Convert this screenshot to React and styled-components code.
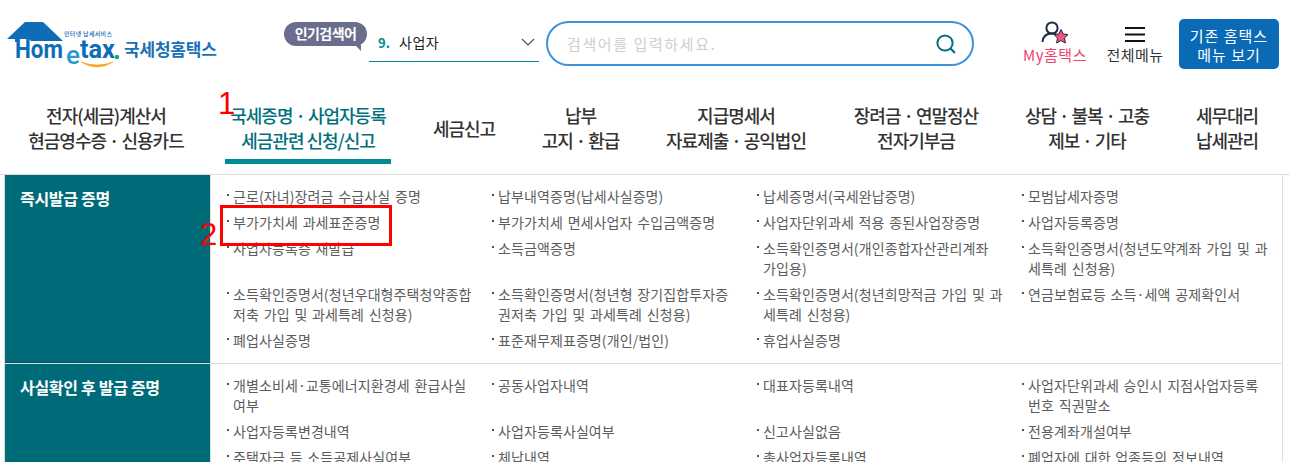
import React from "react";
import styled, { createGlobalStyle } from "styled-components";

const font = `"Noto Sans CJK KR", "Noto Sans", sans-serif`;

const GlobalStyle = createGlobalStyle`
  html, body {
    margin: 0;
    padding: 0;
    background: #fff;
    overflow: hidden;
  }
  body {
    font-family: ${font};
  }
`;

const navItems = [
  ["전자(세금)계산서", "현금영수증 · 신용카드"],
  ["국세증명 · 사업자등록", "세금관련 신청/신고"],
  ["세금신고"],
  ["납부", "고지 · 환급"],
  ["지급명세서", "자료제출 · 공익법인"],
  ["장려금 · 연말정산", "전자기부금"],
  ["상담 · 불복 · 고충", "제보 · 기타"],
  ["세무대리", "납세관리"],
];

const sections = [
  {
    title: "즉시발급 증명",
    items: [
      "근로(자녀)장려금 수급사실 증명",
      "납부내역증명(납세사실증명)",
      "납세증명서(국세완납증명)",
      "모범납세자증명",
      "부가가치세 과세표준증명",
      "부가가치세 면세사업자 수입금액증명",
      "사업자단위과세 적용 종된사업장증명",
      "사업자등록증명",
      "사업자등록증 재발급",
      "소득금액증명",
      "소득확인증명서(개인종합자산관리계좌 가입용)",
      "소득확인증명서(청년도약계좌 가입 및 과세특례 신청용)",
      "소득확인증명서(청년우대형주택청약종합저축 가입 및 과세특례 신청용)",
      "소득확인증명서(청년형 장기집합투자증권저축 가입 및 과세특례 신청용)",
      "소득확인증명서(청년희망적금 가입 및 과세특례 신청용)",
      "연금보험료등 소득·세액 공제확인서",
      "폐업사실증명",
      "표준재무제표증명(개인/법인)",
      "휴업사실증명",
    ],
  },
  {
    title: "사실확인 후 발급 증명",
    items: [
      "개별소비세·교통에너지환경세 환급사실 여부",
      "공동사업자내역",
      "대표자등록내역",
      "사업자단위과세 승인시 지점사업자등록 번호 직권말소",
      "사업자등록변경내역",
      "사업자등록사실여부",
      "신고사실없음",
      "전용계좌개설여부",
      "주택자금 등 소득공제사실여부",
      "체납내역",
      "총사업자등록내역",
      "폐업자에 대한 업종등의 정보내역",
    ],
  },
];

const Logo = () => (
  <LogoSvg viewBox="0 0 212 52" width="212" height="52">
    <path d="M0 19 L18 2 H36 L56 21 H24 L22 19 H12 V22 H8 V19 Z" fill="#0f6cb6" />
    <text x="8" y="38" fontFamily="Roboto, sans-serif" fontWeight="700" fontSize="25" textLength="48" lengthAdjust="spacingAndGlyphs" fill="#0f6cb6">
      Hom
    </text>
    <text x="59" y="44" fontFamily="Roboto, sans-serif" fontWeight="500" fontSize="26" textLength="14" lengthAdjust="spacingAndGlyphs" fill="#2a9ad6">
      e
    </text>
    <text x="73" y="38" fontFamily="Roboto, sans-serif" fontWeight="700" fontSize="25" textLength="35" lengthAdjust="spacingAndGlyphs" fill="#0f6cb6">
      tax
    </text>
    <circle cx="110" cy="37" r="2.2" fill="#1aa94f" />
    <path d="M74 42 Q90 52 106 42 Q90 48 74 42 Z" fill="#f5a623" stroke="#f5a623" strokeWidth="0.6" />
    <text x="57" y="15.5" fontFamily={font} fontWeight="500" fontSize="6" letterSpacing="0.3" fill="#0f6cb6">
      인터넷 납세서비스
    </text>
    <text x="117" y="36" fontFamily={font} fontWeight="700" fontSize="17" letterSpacing="-0.2" fill="#1a6fb5">
      국세청홈택스
    </text>
  </LogoSvg>
);

const Chevron = () => (
  <ChevronSvg viewBox="0 0 14 8" width="14" height="8">
    <path d="M1 1 L7 7 L13 1" fill="none" stroke="#555" strokeWidth="1.2" />
  </ChevronSvg>
);

const SearchIcon = () => (
  <svg viewBox="0 0 22 22" width="22" height="22">
    <circle cx="10" cy="10" r="7.6" fill="none" stroke="#00707c" strokeWidth="2" />
    <path d="M15.5 15.5 L20 20" stroke="#00707c" strokeWidth="2.2" />
  </svg>
);

const MyIcon = () => (
  <svg viewBox="0 0 28 26" width="28" height="26">
    <circle cx="11" cy="9" r="5.6" fill="none" stroke="#1f2a44" strokeWidth="2" />
    <path d="M1.5 23 C2 17 6 14.5 11 14.5 C12.5 14.5 14 14.8 15 15.4" fill="none" stroke="#1f2a44" strokeWidth="2" />
    <path
      d="M20 10.5 L22.2 15 L27 15.6 L23.5 19 L24.4 24 L20 21.6 L15.6 24 L16.5 19 L13 15.6 L17.8 15 Z"
      fill="#f4527a"
      stroke="#1f2a44"
      strokeWidth="1"
    />
  </svg>
);

const HamburgerIcon = () => (
  <svg viewBox="0 0 20 15" width="20" height="15">
    <path d="M0 1 H20 M0 7.5 H20 M0 14 H20" stroke="#111" strokeWidth="2" />
  </svg>
);

export default function App() {
  return (
    <Page>
      <GlobalStyle />
      <Header>
        <Logo />
        <Bubble>인기검색어</Bubble>
        <Rank>
          <RankNum>9.</RankNum>
          <RankText>사업자</RankText>
          <Chevron />
        </Rank>
        <SearchBox>
          <Placeholder>검색어를 입력하세요.</Placeholder>
          <SearchIcon />
        </SearchBox>
        <Tool $pink $w={66} $ml={48}>
          <MyIcon />
          <span>My홈택스</span>
        </Tool>
        <Tool $w={60} $ml={17}>
          <ToolIcon>
            <HamburgerIcon />
          </ToolIcon>
          <span>전체메뉴</span>
        </Tool>
        <OldButton>
          기존 홈택스
          <br />
          메뉴 보기
        </OldButton>
      </Header>

      <Nav>
        {navItems.map((lines, i) => (
          <NavCell key={i}>
            <NavLabel $active={i === 1}>
              {lines.map((l) => (
                <div key={l}>{l}</div>
              ))}
            </NavLabel>
          </NavCell>
        ))}
      </Nav>

      <Table>
        {sections.map((s, i) => (
          <Section key={s.title} $first={i === 0}>
            <SectionTitle>{s.title}</SectionTitle>
            <Items>
              {s.items.map((item) => (
                <Item key={item}>{item}</Item>
              ))}
            </Items>
          </Section>
        ))}
      </Table>

      <Mark $x={218} $y={86}>1</Mark>
      <Mark $x={200} $y={217}>2</Mark>
      <RedBox />
    </Page>
  );
}

const Page = styled.div`
  position: relative;
  width: 1290px;
  height: 462px;
  overflow: hidden;
  background: #fff;
`;

const Header = styled.header`
  height: 90px;
  box-sizing: border-box;
  padding: 19px 0 0 7px;
  display: flex;
  align-items: flex-start;
`;

const LogoSvg = styled.svg`
  flex: none;
  margin-top: 1px;
`;

const Bubble = styled.div`
  position: relative;
  flex: none;
  margin: 3px 0 0 65px;
  width: 83px;
  height: 24px;
  border-radius: 12px;
  background: #6b6d8c;
  color: #fff;
  font-size: 14px;
  font-weight: 700;
  line-height: 23px;
  letter-spacing: -0.6px;
  text-align: center;

  &::after {
    content: "";
    position: absolute;
    right: 6px;
    bottom: -5px;
    border-top: 6px solid #6b6d8c;
    border-left: 6px solid transparent;
  }
`;

const Rank = styled.div`
  flex: none;
  box-sizing: border-box;
  width: 170px;
  height: 43px;
  margin: 0 0 0 2px;
  padding: 4px 4px 0 9px;
  border-bottom: 1px solid #008c95;
  display: flex;
  align-items: center;
  color: #222;
`;

const RankNum = styled.span`
  color: #008c95;
  font-size: 13px;
  font-weight: 700;
  margin-right: 9px;
`;

const RankText = styled.span`
  flex: 1;
  font-size: 14px;
  letter-spacing: 0.6px;
`;

const ChevronSvg = styled.svg`
  flex: none;
`;

const SearchBox = styled.div`
  flex: none;
  box-sizing: border-box;
  width: 428px;
  height: 45px;
  margin: 2px 0 0 7px;
  padding: 0 15px 0 19px;
  border: 2px solid #3d94dd;
  border-radius: 23px;
  display: flex;
  align-items: center;
  justify-content: space-between;
`;

const Placeholder = styled.span`
  font-size: 15px;
  color: #cfcfcf;
  letter-spacing: 1.6px;
`;

const Tool = styled.div`
  flex: none;
  width: ${({ $w }) => $w}px;
  margin: 0 0 0 ${({ $ml }) => $ml}px;
  display: flex;
  flex-direction: column;
  align-items: center;
  font-size: 15px;
  line-height: 20px;
  letter-spacing: 0.5px;
  white-space: nowrap;
  color: ${({ $pink }) => ($pink ? "#f0426e" : "#333")};
`;

const ToolIcon = styled.div`
  height: 26px;
  padding-top: 7px;
  box-sizing: border-box;
`;

const OldButton = styled.div`
  flex: none;
  width: 100px;
  height: 50px;
  margin-left: 14px;
  border-radius: 5px;
  background: #0a6ab5;
  color: #fff;
  font-size: 15px;
  line-height: 19px;
  letter-spacing: 1px;
  padding-top: 7px;
  box-sizing: border-box;
  text-align: center;
`;

const Nav = styled.nav`
  height: 85px;
  box-sizing: border-box;
  padding: 0 0 0 6px;
  display: grid;
  grid-template-columns: 200px 204px 108px 125px 186px 174px 168px 112px;
  border-bottom: 1px solid #ddd;
`;

const NavCell = styled.div`
  display: flex;
  justify-content: center;
  align-items: flex-start;
  padding-top: 12px;
`;

const NavLabel = styled.div`
  box-sizing: border-box;
  height: 62px;
  padding: 0 ${({ $active }) => ($active ? "5px" : "0")} 5px;
  min-width: ${({ $active }) => ($active ? "166px" : "0")};
  display: flex;
  flex-direction: column;
  justify-content: center;
  font-size: 18px;
  font-weight: 500;
  line-height: 25px;
  letter-spacing: -1px;
  text-align: center;
  white-space: nowrap;
  color: ${({ $active }) => ($active ? "#00707c" : "#333")};
  border-bottom: ${({ $active }) => ($active ? "5px solid #008c95" : "5px solid transparent")};
`;

const Table = styled.div`
  margin-left: 4px;
  width: 1279px;
  box-sizing: border-box;
  border-left: 1px solid #ddd;
  border-right: 1px solid #ddd;
`;

const Section = styled.section`
  display: grid;
  grid-template-columns: 206px 1fr;
  border-top: ${({ $first }) => ($first ? "0" : "1px solid #ddd")};
`;

const SectionTitle = styled.h2`
  margin: 0;
  padding: 11px 0 0 15px;
  background: #006b78;
  color: #fff;
  font-size: 16px;
  font-weight: 700;
  line-height: 24px;
  letter-spacing: -0.3px;
  border-right: 1px solid #ddd;
  box-shadow: inset 0 -1px 0 #005560;
`;

const Items = styled.ul`
  margin: 0;
  list-style: none;
  padding: 11px 0 13px 15px;
  display: grid;
  grid-template-columns: repeat(4, 265px);
  row-gap: 6px;
  align-items: start;
`;

const Item = styled.li`
  position: relative;
  padding: 0 17px 0 7px;
  font-size: 14px;
  line-height: 20px;
  letter-spacing: 0.1px;
  word-spacing: 1.5px;
  color: #5c5c5c;

  &::before {
    content: "";
    position: absolute;
    left: 1px;
    top: 8px;
    width: 2px;
    height: 2px;
    background: #555;
  }
`;

const Mark = styled.span`
  position: absolute;
  left: ${({ $x }) => $x}px;
  top: ${({ $y }) => $y}px;
  color: #f00;
  font-family: "Liberation Sans", sans-serif;
  font-size: 31px;
  line-height: 36px;
`;

const RedBox = styled.div`
  position: absolute;
  left: 220px;
  top: 205px;
  width: 172px;
  height: 41px;
  box-sizing: border-box;
  border: 3px solid #f00;
`;
